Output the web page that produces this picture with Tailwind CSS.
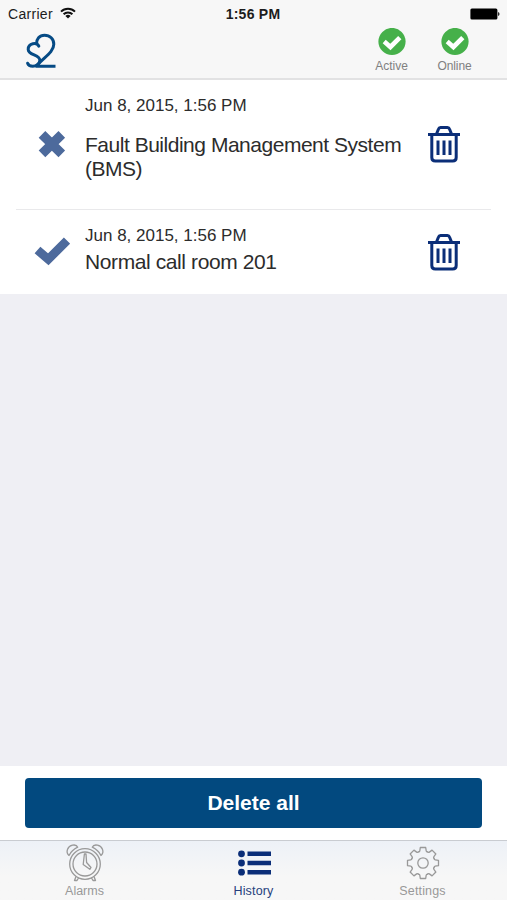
<!DOCTYPE html>
<html lang="en">
<head>
    <meta charset="UTF-8">
    <meta name="viewport" content="width=device-width, initial-scale=1.0">
    <title>History</title>
    <script src="https://cdn.jsdelivr.net/npm/@tailwindcss/browser@4"></script>
</head>
<body class="bg-[#efeff4] font-['Liberation_Sans',Arial,sans-serif]">
    <div class="flex flex-col h-[900px] w-[507px] overflow-hidden">
        <!-- Header -->
        <header class="h-20 shrink-0 bg-[#f7f7f7] border-b-2 border-[#e2e2e3]">
            <div class="grid grid-cols-3 items-center h-7 pl-2 pr-[7px] text-[#1c1c1c]">
                <div class="flex items-center gap-[7px]">
                    <span class="text-[14px] tracking-[0.3px]">Carrier</span>
                    <svg class="w-4 h-3 -mt-0.5" viewBox="0 0 16 12" fill="none" stroke="#111" stroke-width="2">
                        <path d="M1 4.6a10 10 0 0 1 14 0M3.6 7.3a6.2 6.2 0 0 1 8.8 0" />
                        <path d="M8 11.6L5.4 9a3.7 3.7 0 0 1 5.2 0z" fill="#111" stroke="none" />
                    </svg>
                </div>
                <span class="text-center text-[14px] font-bold tracking-[0.25px] -ml-0.5">1:56 PM</span>
                <svg class="justify-self-end w-[30px] h-3" viewBox="0 0 30 12">
                    <rect x="0.4" y="0.4" width="27" height="11.2" rx="1.5" fill="#000" />
                    <path d="M28.2 4v4c1.7-.6 1.7-3.4 0-4z" fill="#000" />
                </svg>
            </div>
            <div class="flex justify-between pl-[25px] pr-[21px]">
                <svg class="w-8 h-9 mt-[5px]" viewBox="25 33 32 36" fill="none" stroke="#064b85" stroke-width="3" stroke-linecap="round" stroke-linejoin="round">
                    <path d="M38.8 46.2C37 42 28.2 42.8 28.2 49.4C28.2 55.5 40.4 54.5 39.8 60.6C39.5 64 36 66.2 32.800 66.2C30 66.2 28.2 65 27.6 63.2" />
                    <path d="M36.6 44C36.2 39 39.5 35.2 44.5 35.2C50 35.2 53.8 39 53.8 44.2C53.8 52.500 43 58 36.5 66.2H55.500" stroke-linecap="butt" />
                </svg>
                <div class="flex">
                    <div class="w-[63px] flex flex-col items-center">
                        <svg class="w-7 h-7" viewBox="0 0 28 28">
                            <circle cx="14" cy="13.5" r="13.6" fill="#46b04a" />
                            <path d="M6.2 13.6l6.2 5.4 9.4-9.4" fill="none" stroke="#fff" stroke-width="4.6" />
                        </svg>
                        <span class="text-[12px] leading-4 mt-0.5 text-[#808080]">Active</span>
                    </div>
                    <div class="w-[63px] flex flex-col items-center">
                        <svg class="w-7 h-7" viewBox="0 0 28 28">
                            <circle cx="14" cy="13.5" r="13.6" fill="#46b04a" />
                            <path d="M6.2 13.6l6.2 5.4 9.4-9.4" fill="none" stroke="#fff" stroke-width="4.6" />
                        </svg>
                        <span class="text-[12px] leading-4 mt-0.5 text-[#808080] tracking-[-0.1px]">Online</span>
                    </div>
                </div>
            </div>
        </header>

        <!-- History list -->
        <main class="flex-1">
            <ul class="bg-white px-4 text-[#2c2c2c]">
                <li class="flex items-center h-[130px] border-b border-[#e9e9eb]">
                    <svg class="w-9 h-8 ml-[18px] -mt-0.5" viewBox="0 0 36 32" fill="none" stroke="#4d6a9c" stroke-linejoin="round">
                        <path d="M8 6.3L27.8 25.8M27.8 6.3L8 25.8" stroke-width="9.4" />
                    </svg>
                    <div class="w-[330px] ml-[15px] h-[100px]">
                        <p class="text-[17px] leading-[22px] whitespace-nowrap">Jun 8, 2015, 1:56 PM</p>
                        <p class="text-[21px] leading-[24px] tracking-[-0.48px] mt-4">Fault Building Management System (BMS)</p>
                    </div>
                    <svg class="w-[34px] h-[38px] ml-3 -mt-0.5" viewBox="0 0 34 38" fill="none" stroke="#0b2e78" stroke-width="3">
                        <path d="M1 9.5H33M9.5 9L11.5 4Q12 2.5 13.5 2.5H20.5Q22 2.5 22.5 4L24.5 9" />
                        <path d="M4.8 10V32.5Q4.8 36 8.3 36H25.7Q29.2 36 29.2 32.5V10M11 15.5V30M17 15.5V30M23 15.5V30" />
                    </svg>
                </li>
                <li class="flex items-center h-[84px]">
                    <svg class="w-9 h-8 ml-[18px] -mt-1" viewBox="0 0 36 32">
                        <path d="M3.5 16l10.8 9.3L33 6.5" fill="none" stroke="#4d6a9c" stroke-width="8.8" />
                    </svg>
                    <div class="w-[330px] ml-[15px] -mt-[5px]">
                        <p class="text-[17px] leading-[22px] whitespace-nowrap">Jun 8, 2015, 1:56 PM</p>
                        <p class="text-[21px] leading-[25px] tracking-[-0.4px] mt-0.5">Normal call room 201</p>
                    </div>
                    <svg class="w-[34px] h-[38px] ml-3" viewBox="0 0 34 38" fill="none" stroke="#0b2e78" stroke-width="3">
                        <path d="M1 9.5H33M9.5 9L11.5 4Q12 2.5 13.5 2.5H20.5Q22 2.5 22.5 4L24.5 9" />
                        <path d="M4.8 10V32.5Q4.8 36 8.3 36H25.7Q29.2 36 29.2 32.5V10M11 15.5V30M17 15.5V30M23 15.5V30" />
                    </svg>
                </li>
            </ul>
        </main>

        <!-- Delete all -->
        <div class="h-[74px] shrink-0 bg-white px-[25px] pt-3">
            <button class="w-full h-[50px] rounded bg-[#02497f] text-white text-[21px] font-bold">Delete all</button>
        </div>

        <!-- Tab bar -->
        <nav class="h-[60px] shrink-0 grid grid-cols-3 border-t border-[#c9ccd1] bg-linear-to-b from-[#edf1f7] to-[#f7f7f7] to-60% text-[#999] text-[12.5px]">
            <a href="#" class="flex flex-col items-center pt-0.5">
                <svg class="w-10 h-10" viewBox="-20 -20 40 40" fill="none" stroke="#999" stroke-width="1.3" stroke-linejoin="round">
                    <circle cy="1" r="15.3" />
                    <circle cy="1" r="12" />
                    <path d="M-.6-9H1L1.6-.5L6 4.5L4.8 6.3L-1.8 1.5Z" />
                    <path d="M-16-7.5C-20-11-17-17-12.5-17.8C-10-18.3-8-17.5-7.3-15.8C-11-14-14-11.5-16-7.5ZM16-7.5C20-11 17-17 12.5-17.8C10-18.3 8-17.5 7.3-15.8C11-14 14-11.5 16-7.5Z" />
                    <path d="M-9 13.5L-10.5 17.5H-8L-6.5 15M9 13.5L10.5 17.5H8L6.5 15" />
                </svg>
                <span class="leading-4">Alarms</span>
            </a>
            <a href="#" class="flex flex-col items-center pt-0.5 text-[#263f7d]">
                <svg class="w-10 h-10" viewBox="-20 -20 40 40" fill="#0b2e78">
                    <circle cx="-12.5" cy="-9.2" r="3.4" />
                    <circle cx="-12.5" cy="0" r="3.4" />
                    <circle cx="-12.5" cy="9.2" r="3.4" />
                    <path d="M-6.5-11.5h23.5v4.6h-23.5zM-6.5-2.3h23.5v4.6h-23.5zM-6.5 6.9h23.5v4.6h-23.5z" />
                </svg>
                <span class="leading-4 tracking-[0.15px]">History</span>
            </a>
            <a href="#" class="flex flex-col items-center pt-0.5">
                <svg class="w-10 h-10" viewBox="-20 -20 40 40" fill="none" stroke="#999" stroke-width="1.3" stroke-linejoin="round" stroke-linecap="round">
                    <circle r="5.2" />
                    <path id="tooth" d="M-4.6-11.1Q-3.4-11-3.2-12.2L-2.7-15.5H2.7L3.2-12.2Q3.4-11 4.6-11.1" />
                    <use href="#tooth" transform="rotate(45)" />
                    <use href="#tooth" transform="rotate(90)" />
                    <use href="#tooth" transform="rotate(135)" />
                    <use href="#tooth" transform="rotate(180)" />
                    <use href="#tooth" transform="rotate(225)" />
                    <use href="#tooth" transform="rotate(270)" />
                    <use href="#tooth" transform="rotate(315)" />
                </svg>
                <span class="leading-4 tracking-[0.15px]">Settings</span>
            </a>
        </nav>
    </div>
</body>
</html>
